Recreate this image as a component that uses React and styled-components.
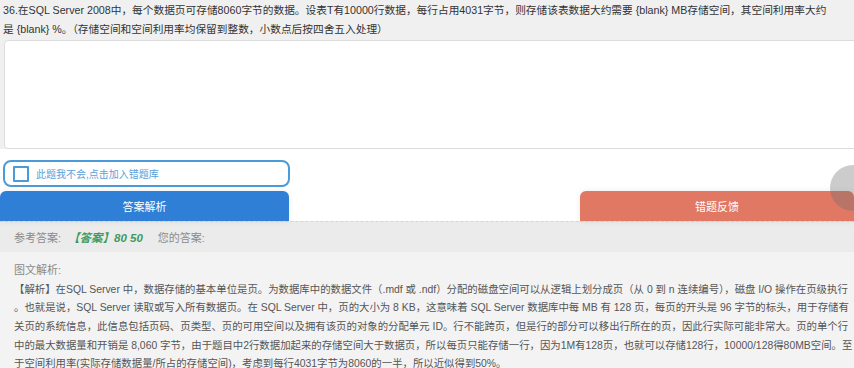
import styled, { createGlobalStyle } from "styled-components"

const GlobalStyle = createGlobalStyle`
  html, body {
    margin: 0;
    padding: 0;
    background: #f3f3f3;
    font-family: "Liberation Sans", "Noto Sans CJK SC", sans-serif;
  }
  * { box-sizing: border-box; }
`

const question =
  "36.在SQL Server 2008中，每个数据页可存储8060字节的数据。设表T有10000行数据，每行占用4031字节，则存储该表数据大约需要 {blank} MB存储空间，其空间利用率大约是 {blank} %。（存储空间和空间利用率均保留到整数，小数点后按四舍五入处理）"

function App() {
  return (
    <Page>
      <GlobalStyle />
      <QuestionBlock>
        <QuestionText>{question}</QuestionText>
        <AnswerBox />
      </QuestionBlock>
      <ActionArea>
        <WrongBookToggle>
          <CheckSquare />
          <ToggleText>此题我不会,点击加入错题库</ToggleText>
        </WrongBookToggle>
        <ButtonRow>
          <ActionButton color="#2f7fd7" width="289px">答案解析</ActionButton>
          <ActionButton color="#e07864" width="274px">错题反馈</ActionButton>
        </ButtonRow>
        <FloatBall />
      </ActionArea>
      <AnswerRow>
        <Muted>参考答案:</Muted>
        <RightAnswer>【答案】80 50</RightAnswer>
        <Muted>您的答案:</Muted>
      </AnswerRow>
      <Analysis>
        <Muted>图文解析:</Muted>
        <AnalysisText>
          【解析】在SQL Server 中，数据存储的基本单位是页。为数据库中的数据文件（.mdf 或 .ndf）分配的磁盘空间可以从逻辑上划分成页（从 0 到 n 连续编号），磁盘 I/O 操作在页级执行 。也就是说，SQL Server 读取或写入所有数据页。在 SQL Server 中，页的大小为 8 KB，这意味着 SQL Server 数据库中每 MB 有 128 页，每页的开头是 96 字节的标头，用于存储有关页的系统信息，此信息包括页码、页类型、页的可用空间以及拥有该页的对象的分配单元 ID。行不能跨页，但是行的部分可以移出行所在的页，因此行实际可能非常大。页的单个行中的最大数据量和开销是 8,060 字节，由于题目中2行数据加起来的存储空间大于数据页，所以每页只能存储一行，因为1M有128页，也就可以存储128行，10000/128得80MB空间。至于空间利用率(实际存储数据量/所占的存储空间)，考虑到每行4031字节为8060的一半，所以近似得到50%。
        </AnalysisText>
      </Analysis>
    </Page>
  )
}

const Page = styled.div`
  width: 854px;
  height: 368px;
  overflow: hidden;
  background: #f3f3f3;
`

const QuestionBlock = styled.div`
  background: #f0f0f0;
  padding: 0 0 0 3px;
`

const QuestionText = styled.p`
  margin: 0;
  font-size: 10.7px;
  line-height: 19px;
  color: #333;
  padding-top: 1px;
  padding-right: 20px;
`

const AnswerBox = styled.div`
  margin: 1px -6px 0 1px;
  height: 109px;
  background: #fff;
  border: 1px solid #dcdcdc;
  border-radius: 4px;
`

const ActionArea = styled.div`
  position: relative;
  background: #fff;
  padding-top: 11px;
`

const WrongBookToggle = styled.label`
  display: flex;
  align-items: center;
  width: 287px;
  height: 27px;
  margin-left: 3px;
  border: 2px solid #4b9bd9;
  border-radius: 8px;
  cursor: pointer;
`

const CheckSquare = styled.span`
  width: 16px;
  height: 16px;
  margin-left: 8px;
  border: 2px solid #4b9bd9;
  border-radius: 1px;
`

const ToggleText = styled.span`
  margin-left: 7px;
  font-size: 10px;
  color: #5aa0d8;
`

const ButtonRow = styled.div`
  display: flex;
  justify-content: space-between;
  margin-top: 4px;
`

const ActionButton = styled.div`
  width: ${(p) => p.width};
  height: 30px;
  display: flex;
  align-items: center;
  justify-content: center;
  background: ${(p) => p.color};
  border-radius: 6px 6px 0 0;
  color: #fff;
  font-size: 11px;
  box-shadow: 0 0 6px rgba(0, 0, 0, 0.08);
`

const FloatBall = styled.div`
  position: absolute;
  right: -22px;
  top: 16px;
  width: 46px;
  height: 46px;
  border-radius: 50%;
  background: rgba(110, 110, 110, 0.35);
`

const AnswerRow = styled.div`
  display: flex;
  align-items: center;
  height: 31px;
  padding-left: 14px;
  background: #ebebeb;
  border-top: 1px dashed #d6d6d6;
`

const Muted = styled.span`
  font-size: 11px;
  color: #8a8a8a;
`

const RightAnswer = styled.span`
  margin: 0 15px 0 7px;
  font-size: 11.5px;
  font-weight: bold;
  font-style: italic;
  color: #3e9a5c;
`

const Analysis = styled.div`
  padding: 7px 0 0 14px;
  line-height: 19.5px;
`

const AnalysisText = styled.p`
  margin: 0;
  font-size: 10.4px;
  line-height: 18.7px;
  color: #555;
`

export default App
